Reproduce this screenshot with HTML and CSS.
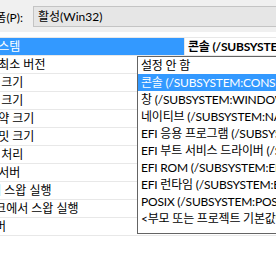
FILE: index.html
```html
<!DOCTYPE html>
<html lang="ko">
<head>
  <meta charset="UTF-8">
  <meta name="viewport" content="width=device-width, initial-scale=1.0">
  <title>속성 페이지</title>
  <link rel="stylesheet" href="styles.css">
</head>
<body>
  <div class="toolbar">
    <span class="label">플랫폼(P):</span>
    <div class="combo">활성(Win32)</div>
  </div>

  <div class="grid">
    <div class="row partial"></div>
    <div class="row selected">
      <span class="name">하위 시스템</span>
      <span class="value">콘솔 (/SUBSYSTEM:CONSOLE)</span>
    </div>
    <div class="row"><span class="name">필요한 최소 버전</span></div>
    <div class="row"><span class="name">힙 예약 크기</span></div>
    <div class="row"><span class="name">힙 커밋 크기</span></div>
    <div class="row"><span class="name">스택 예약 크기</span></div>
    <div class="row"><span class="name">스택 커밋 크기</span></div>
    <div class="row"><span class="name">큰 주소 처리</span></div>
    <div class="row"><span class="name">터미널 서버</span></div>
    <div class="row"><span class="name">CD에서 스왑 실행</span></div>
    <div class="row"><span class="name">네트워크에서 스왑 실행</span></div>
    <div class="row"><span class="name">드라이버</span></div>
  </div>

  <ul class="dropdown">
    <li>설정 안 함</li>
    <li class="active">콘솔 (/SUBSYSTEM:CONSOLE)</li>
    <li>창 (/SUBSYSTEM:WINDOWS)</li>
    <li>네이티브 (/SUBSYSTEM:NATIVE)</li>
    <li>EFI 응용 프로그램 (/SUBSYSTEM:EFI_APPLICATION)</li>
    <li>EFI 부트 서비스 드라이버 (/SUBSYSTEM:EFI_BOOT_SERVICE_DRIVER)</li>
    <li>EFI ROM (/SUBSYSTEM:EFI_ROM)</li>
    <li>EFI 런타임 (/SUBSYSTEM:EFI_RUNTIME_DRIVER)</li>
    <li>POSIX (/SUBSYSTEM:POSIX)</li>
    <li>&lt;부모 또는 프로젝트 기본값에서 상속&gt;</li>
  </ul>
</body>
</html>
```

FILE: styles.css
```css
body {
  margin: 0;
  overflow: hidden;
  background: #ffffff;
  font-family: Lato, "Noto Sans CJK KR", sans-serif;
  font-size: 12px;
  color: #000000;
}

.toolbar {
  display: flex;
  align-items: center;
  gap: 10px;
  height: 32px;
  background: #f0f0f0;
}

.label {
  flex: none;
  width: 56px;
  margin-left: -33px;
  text-align: right;
  white-space: nowrap;
}

.combo {
  flex: none;
  width: 260px;
  height: 19px;
  line-height: 19px;
  padding-left: 4px;
  background: #e6e6e6;
  border: 1px solid #c4c4c4;
  white-space: nowrap;
}

.grid {
  display: flex;
  flex-direction: column;
}

.row {
  display: flex;
  height: 17px;
  line-height: 17px;
  border-bottom: 1px solid #e8e8e8;
  white-space: nowrap;
}

.row.partial {
  height: 5px;
}

.name {
  flex: none;
  width: 184px;
  overflow: hidden;
  text-indent: -38px;
}

.selected .name {
  background: #3399ff;
  color: #ffffff;
}

.value {
  padding-left: 3px;
  border-left: 1px solid #e8e8e8;
  font-weight: bold;
  letter-spacing: -0.2px;
}

.dropdown {
  position: absolute;
  left: 137px;
  top: 56px;
  width: 160px;
  margin: 0;
  padding: 0 0 6px 0;
  list-style: none;
  background: #ffffff;
  border: 1px solid #646464;
  white-space: nowrap;
  letter-spacing: -0.2px;
}

.dropdown li {
  height: 17px;
  line-height: 17px;
  padding-left: 3px;
}

.dropdown li.active {
  background: #3399ff;
  color: #ffffff;
}
```
